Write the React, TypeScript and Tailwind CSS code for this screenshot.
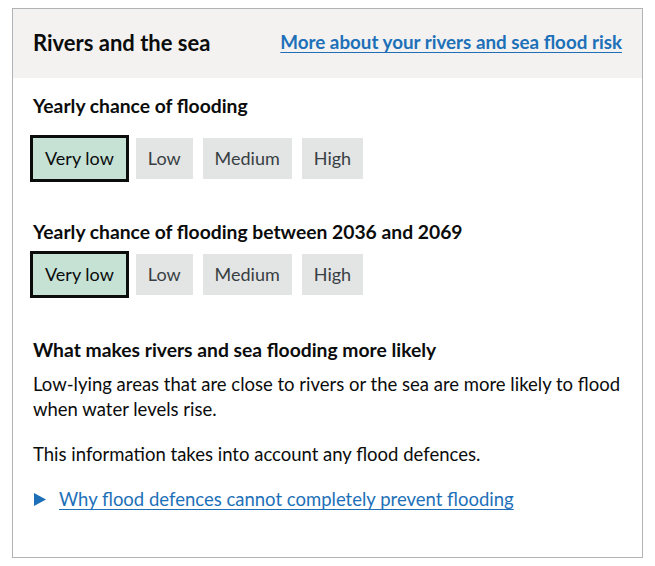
import React from "react";

const levels = ["Very low", "Low", "Medium", "High"];

function RiskScale({ active }: { active: string }) {
  return (
    <div className="flex items-center gap-[10px]">
      {levels.map((l) =>
        l === active ? (
          <div
            key={l}
            className="h-[47px] -mx-[3px] px-[12px] flex items-center border-[3px] border-[#0b0c0c] bg-[#c5e2d5] text-[#0b0c0c] text-[18px]"
          >
            {l}
          </div>
        ) : (
          <div
            key={l}
            className="h-[41px] px-[12px] flex items-center bg-[#e3e4e4] text-[#383f43] text-[18px]"
          >
            {l}
          </div>
        )
      )}
    </div>
  );
}

export default function App() {
  return (
    <div className="pt-[8px] pl-[12px] bg-white" style={{ fontFamily: "Lato, 'Noto Sans', Arial, sans-serif" }}>
      <div className="w-[631px] h-[550px] border border-[#b1b4b6] text-[#0b0c0c]">
        <div className="h-[69px] bg-[#f3f2f1] flex items-center justify-between px-[20px] pb-[2px]">
          <h2 className="text-[22px] font-bold">Rivers and the sea</h2>
          <a href="#" className="text-[18.8px] font-bold text-[#1d70b8] underline underline-offset-[3px] decoration-1">
            More about your rivers and sea flood risk
          </a>
        </div>
        <div className="px-[20px] pt-[15px]">
          <h3 className="text-[19.3px] font-bold leading-[25px]">Yearly chance of flooding</h3>
          <div className="mt-[17px]">
            <RiskScale active="Very low" />
          </div>
          <h3 className="mt-[37px] text-[19.3px] font-bold leading-[25px]">
            Yearly chance of flooding between 2036 and 2069
          </h3>
          <div className="mt-[7px]">
            <RiskScale active="Very low" />
          </div>
          <h3 className="mt-[39px] text-[19.3px] font-bold leading-[25px]">
            What makes rivers and sea flooding more likely
          </h3>
          <p className="mt-[10px] text-[18.5px] leading-[25px]">
            Low-lying areas that are close to rivers or the sea are more likely to flood when water levels rise.
          </p>
          <p className="mt-[20px] text-[18.5px] leading-[25px]">
            This information takes into account any flood defences.
          </p>
          <div className="mt-[20px] flex items-center gap-[13px]">
            <svg width="12" height="13" viewBox="0 0 12 13" className="ml-[1px]">
              <polygon points="0,0 12,6.5 0,13" fill="#1d70b8" />
            </svg>
            <a href="#" className="text-[18.5px] leading-[25px] text-[#1d70b8] underline underline-offset-[3px] decoration-1">
              Why flood defences cannot completely prevent flooding
            </a>
          </div>
        </div>
      </div>
    </div>
  );
}
